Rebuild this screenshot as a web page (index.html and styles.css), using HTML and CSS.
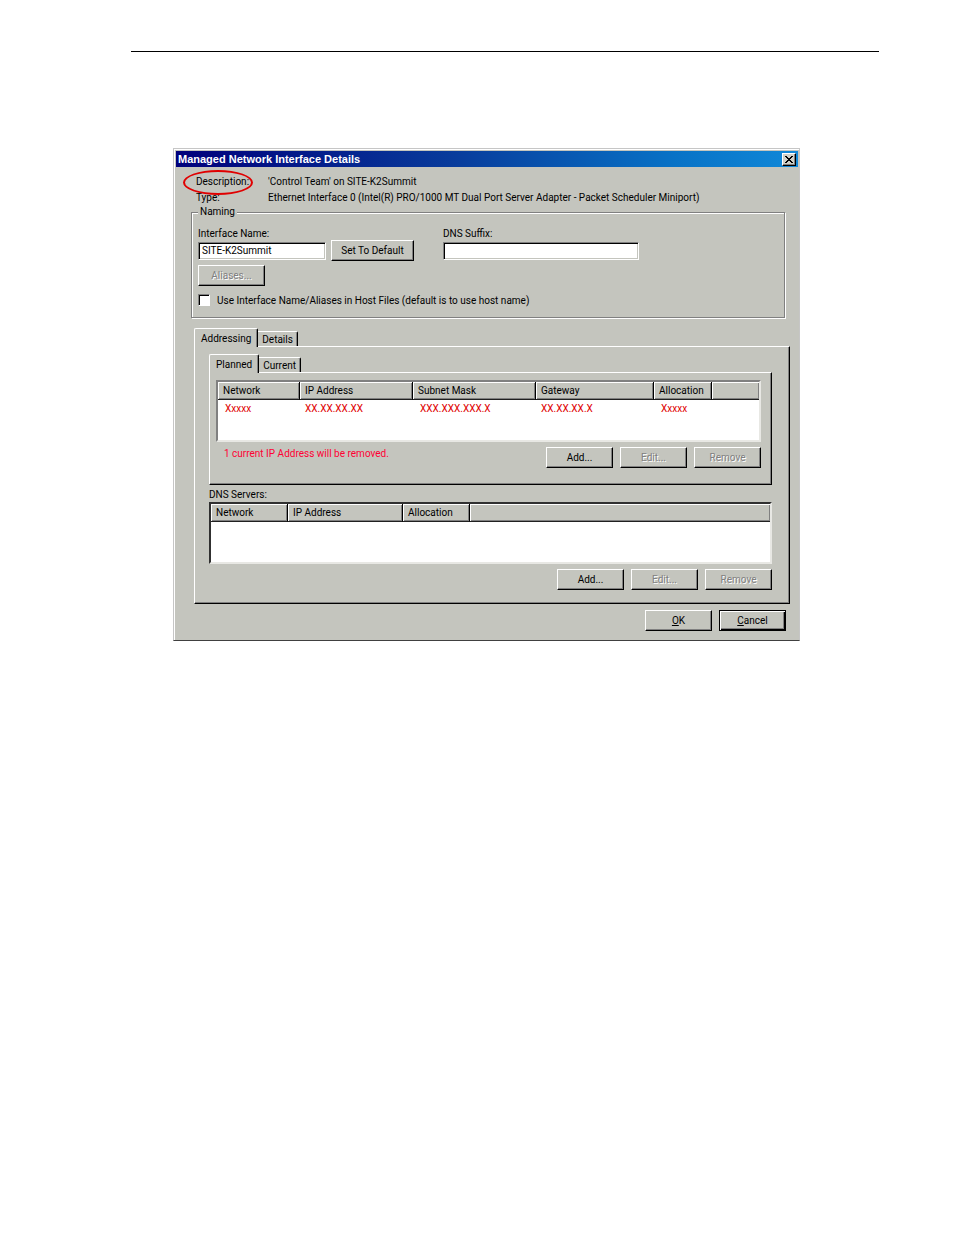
FILE: index.html
```html
<!DOCTYPE html>
<html lang="en">
<head>
    <meta charset="UTF-8">
    <meta name="viewport" content="width=device-width, initial-scale=1.0">
    <title>Managed Network Interface Details</title>
    <link rel="stylesheet" href="styles.css">
</head>
<body>
    <main class="page">
        <div class="dialog" role="dialog" aria-labelledby="dialog-title">
            <div class="titlebar">
                <h1 id="dialog-title">Managed Network Interface Details</h1>
                <button type="button" class="close" aria-label="Close">
                    <svg width="8" height="7" viewBox="0 0 8 7" shape-rendering="crispEdges">
                        <path d="M0 0h2v1h1v1h2v-1h1v-1h2v1h-1v1h-1v1h-1v1h1v1h1v1h1v1h-2v-1h-1v-1h-2v1h-1v1h-2v-1h1v-1h1v-1h1v-1h-1v-1h-1v-1h-1z"/>
                    </svg>
                </button>
            </div>

            <dl class="summary">
                <dt class="circled">Description:</dt>
                <dd>'Control Team' on SITE-K2Summit</dd>
                <dt>Type:</dt>
                <dd>Ethernet Interface 0 (Intel(R) PRO/1000 MT Dual Port Server Adapter - Packet Scheduler Miniport)</dd>
            </dl>

            <!-- Naming -->
            <fieldset class="naming">
                <legend>Naming</legend>
                <div class="naming-fields">
                    <div>
                        <label for="interface-name">Interface Name:</label>
                        <div class="field-row">
                            <input type="text" id="interface-name" class="name-input" value="SITE-K2Summit">
                            <button type="button" class="btn btn-wide">Set To Default</button>
                        </div>
                    </div>
                    <div>
                        <label for="dns-suffix">DNS Suffix:</label>
                        <div class="field-row">
                            <input type="text" id="dns-suffix" class="suffix-input">
                        </div>
                    </div>
                </div>
                <button type="button" class="btn" disabled>Aliases...</button>
                <div class="check-row">
                    <input type="checkbox" id="use-aliases">
                    <label for="use-aliases">Use Interface Name/Aliases in Host Files (default is to use host name)</label>
                </div>
            </fieldset>

            <!-- Addressing -->
            <div class="addressing">
                <div class="tabs" role="tablist">
                    <button type="button" class="tab active" role="tab" aria-selected="true">Addressing</button>
                    <button type="button" class="tab" role="tab" aria-selected="false">Details</button>
                </div>
                <div class="panel outer" role="tabpanel">
                    <div class="tabs" role="tablist">
                        <button type="button" class="tab active" role="tab" aria-selected="true">Planned</button>
                        <button type="button" class="tab" role="tab" aria-selected="false">Current</button>
                    </div>
                    <div class="panel inner" role="tabpanel">
                        <div class="list">
                            <table>
                                <colgroup>
                                    <col class="c-network">
                                    <col class="c-ip">
                                    <col class="c-mask">
                                    <col class="c-gateway">
                                    <col class="c-alloc">
                                    <col>
                                </colgroup>
                                <thead>
                                    <tr>
                                        <th>Network</th>
                                        <th>IP Address</th>
                                        <th>Subnet Mask</th>
                                        <th>Gateway</th>
                                        <th>Allocation</th>
                                        <th></th>
                                    </tr>
                                </thead>
                                <tbody>
                                    <tr>
                                        <td>Xxxxx</td>
                                        <td>XX.XX.XX.XX</td>
                                        <td>XXX.XXX.XXX.X</td>
                                        <td>XX.XX.XX.X</td>
                                        <td>Xxxxx</td>
                                        <td></td>
                                    </tr>
                                </tbody>
                            </table>
                        </div>
                        <div class="actions">
                            <p class="warning">1 current IP Address will be removed.</p>
                            <button type="button" class="btn">Add...</button>
                            <button type="button" class="btn" disabled>Edit...</button>
                            <button type="button" class="btn" disabled>Remove</button>
                        </div>
                    </div>

                    <h2 id="dns-title">DNS Servers:</h2>
                    <div class="list dns">
                        <table aria-labelledby="dns-title">
                            <colgroup>
                                <col class="d-network">
                                <col class="d-ip">
                                <col class="d-alloc">
                                <col>
                            </colgroup>
                            <thead>
                                <tr>
                                    <th>Network</th>
                                    <th>IP Address</th>
                                    <th>Allocation</th>
                                    <th></th>
                                </tr>
                            </thead>
                        </table>
                    </div>
                    <div class="actions">
                        <button type="button" class="btn">Add...</button>
                        <button type="button" class="btn" disabled>Edit...</button>
                        <button type="button" class="btn" disabled>Remove</button>
                    </div>
                </div>
            </div>

            <div class="actions footer">
                <button type="button" class="btn"><u>O</u>K</button>
                <button type="button" class="btn default"><u>C</u>ancel</button>
            </div>
        </div>
    </main>
</body>
</html>
```

FILE: styles.css
```css
*, *::after {
    box-sizing: border-box;
}
body {
    margin: 0;
    background: #fff;
    color: #000;
    font-family: Roboto, "Liberation Sans", Arial, sans-serif;
    font-size: 10px;
    line-height: 13px;
}
button, input {
    font: inherit;
    color: inherit;
    margin: 0;
    border-radius: 0;
}
.page {
    margin: 51px 75px 0 131px;
    padding: 96px 79px 0 42px;
    border-top: 1px solid #000;
}

/* Window frame */
.dialog {
    background: #c4c5be;
    border: 1px solid #c6c6c6;
    border-bottom-color: #404040;
    box-shadow: inset 1px 1px 0 #fff;
    padding: 2px 0 9px;
}
.titlebar {
    display: flex;
    align-items: center;
    justify-content: space-between;
    height: 16px;
    margin: 0 1px 0 2px;
    padding: 0 2px;
    background: linear-gradient(to right, #00007b, #083c9c 45%, #0872c6 80%, #1088d8);
}
.titlebar h1 {
    margin: 0;
    color: #fff;
    font-family: "Liberation Sans", Arial, sans-serif;
    font-size: 11px;
    font-weight: bold;
}
.close {
    display: flex;
    align-items: center;
    justify-content: center;
    width: 14px;
    height: 13px;
    padding: 0;
    background: #d0d0c8;
    border: 1px solid;
    border-color: #fff #000 #000 #fff;
    box-shadow: inset -1px -1px 0 #808080;
}

/* Description and type */
.summary {
    display: grid;
    grid-template-columns: 72px 1fr;
    margin: 7px 13px 0 22px;
    line-height: 16px;
}
.summary dt, .summary dd {
    margin: 0;
    white-space: nowrap;
}
.circled {
    position: relative;
}
.circled::after {
    content: "";
    position: absolute;
    top: -4px;
    left: -13px;
    width: 70px;
    height: 25px;
    border: 2px solid #e00000;
    border-radius: 50%;
}

/* Naming group */
.naming {
    margin: 0 14px 0 17px;
    padding: 9px 6px 10px;
    border: 1px solid #808080;
    box-shadow: 1px 1px 0 #fff, inset 1px 1px 0 #fff;
}
.naming legend {
    padding: 0 2px;
    line-height: 12px;
    background: #c4c5be;
}
.naming-fields {
    display: grid;
    grid-template-columns: 245px 1fr;
    margin-bottom: 4px;
}
.naming label {
    display: block;
}
.field-row {
    display: flex;
    align-items: center;
    gap: 5px;
    height: 21px;
}
input[type="text"] {
    height: 18px;
    padding: 0 3px;
    background: #fff;
    border: 1px solid;
    border-color: #808080 #fff #fff #808080;
    box-shadow: inset 1px 1px 0 #000, inset -1px -1px 0 #c4c5be;
    outline: none;
}
.name-input {
    width: 128px;
}
.suffix-input {
    width: 196px;
}
.check-row {
    display: flex;
    align-items: center;
    gap: 7px;
    height: 14px;
    margin-top: 7px;
}
input[type="checkbox"] {
    appearance: none;
    width: 12px;
    height: 12px;
    background: #fff;
    border: 1px solid;
    border-color: #808080 #fff #fff #808080;
    box-shadow: inset 1px 1px 0 #000;
}

/* Buttons */
.btn {
    display: block;
    width: 67px;
    height: 21px;
    padding: 0;
    text-align: center;
    background: #c4c5be;
    border: 1px solid;
    border-color: #fff #000 #000 #fff;
    box-shadow: inset -1px -1px 0 #808080;
}
.btn-wide {
    width: 83px;
}
.btn:disabled {
    color: #808080;
    text-shadow: 1px 1px 0 #fff;
}
.btn.default {
    border-color: #000;
    box-shadow: inset 1px 1px 0 #fff, inset -1px -1px 0 #000, inset -2px -2px 0 #808080;
}
.actions {
    display: flex;
    justify-content: flex-end;
    gap: 7px;
    margin-top: 5px;
}
.warning {
    flex: 1;
    margin: 0 0 0 8px;
    color: #ff0033;
}

/* Tabs */
.addressing {
    margin: 10px 9px 0 20px;
}
.tabs {
    display: flex;
    align-items: flex-end;
    height: 18px;
}
.tab {
    height: 15px;
    padding: 0 4px;
    background: #c4c5be;
    border: 1px solid;
    border-color: #fff #000 transparent #fff;
    border-left: 0;
    border-bottom: 0;
    border-radius: 0 2px 0 0;
    box-shadow: inset -1px 0 0 #808080;
}
.tab.active {
    position: relative;
    height: 19px;
    margin-bottom: -1px;
    padding: 0 6px;
    border-left: 1px solid #fff;
    border-radius: 2px 2px 0 0;
}
.panel {
    border: 1px solid;
    border-color: #fff #000 #000 #fff;
    box-shadow: inset -1px -1px 0 #808080;
}
.outer {
    padding: 7px 17px 13px 14px;
}
.inner {
    padding: 7px 10px 16px 6px;
}
.panel h2 {
    margin: 3px 0 1px;
    font-size: 10px;
    font-weight: normal;
}

/* Lists */
.list {
    height: 62px;
    background: #fff;
    border: 2px solid;
    border-color: #808080 #e8e8e4 #e8e8e4 #808080;
}
.dns {
    border-top-color: #303030;
    border-left-color: #303030;
}
table {
    width: 100%;
    table-layout: fixed;
    border-collapse: separate;
    border-spacing: 0;
}
th {
    height: 18px;
    padding: 0 5px 1px;
    text-align: left;
    font-weight: normal;
    background: #c4c5be;
    border-right: 1px solid #000;
    border-bottom: 1px solid #202020;
    box-shadow: inset 1px 1px 0 #fff, inset -1px -1px 0 #808080;
}
th:last-child {
    border-right: 0;
}
td {
    height: 17px;
    padding: 0 7px;
    color: #e00000;
    white-space: nowrap;
}
td:nth-child(2), td:nth-child(4) {
    padding-left: 5px;
}
.c-network { width: 82px; }
.c-ip { width: 113px; }
.c-mask { width: 123px; }
.c-gateway { width: 118px; }
.c-alloc { width: 58px; }
.d-network { width: 77px; }
.d-ip { width: 115px; }
.d-alloc { width: 67px; }

.footer {
    margin: 6px 13px 0;
}
```
